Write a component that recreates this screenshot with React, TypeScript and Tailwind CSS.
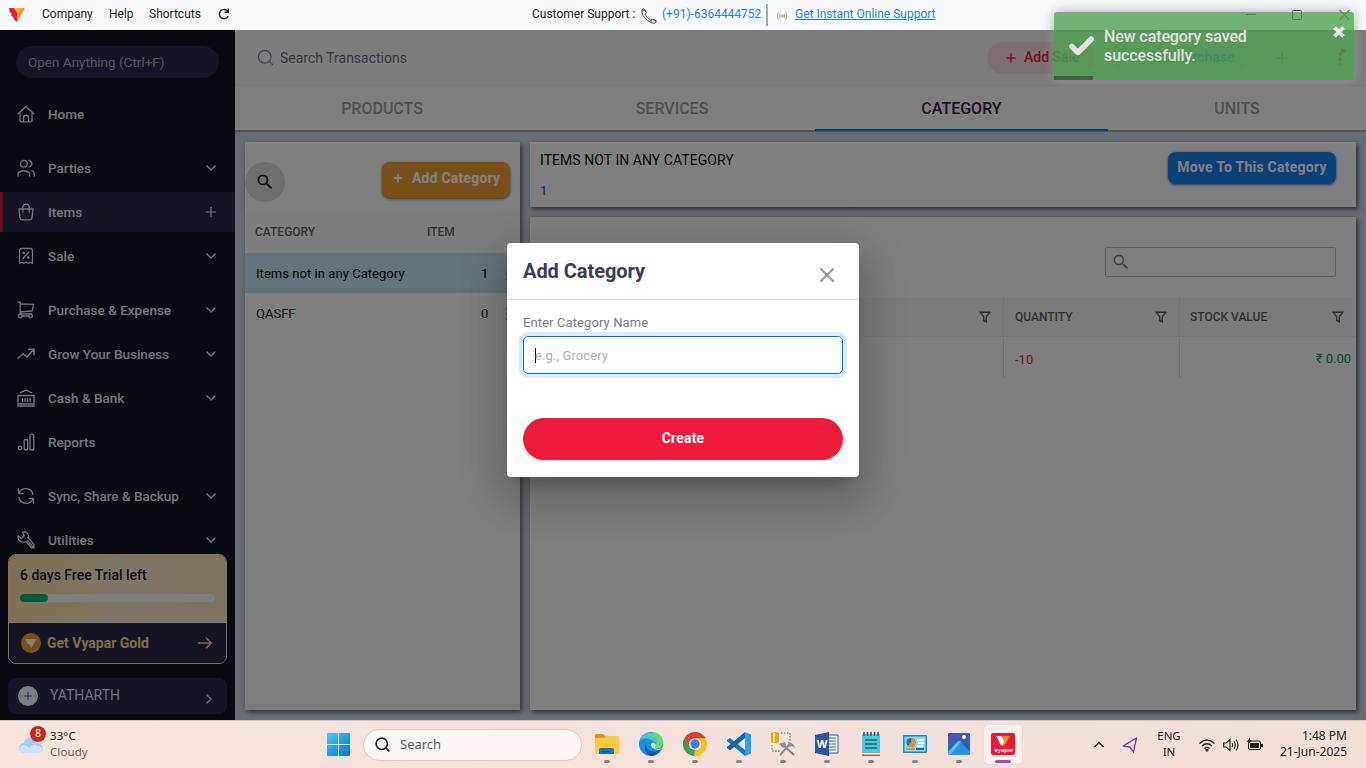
import React from "react";
import {
  Search, ChevronDown, ChevronRight, Plus, ArrowRight, Radio, Check, X,
} from "lucide-react";

const ico = {
  width: 18, height: 18, viewBox: "0 0 18 18", fill: "none", stroke: "currentColor",
  strokeWidth: 1.3, strokeLinecap: "round" as const, strokeLinejoin: "round" as const,
};

const HomeIcon = () => (
  <svg {...ico}><path d="M1.2 8.800 9 1.500l7.800 7.300M3 7.800v7.700q0 1.300 1.300 1.300h9.400q1.300 0 1.300-1.300V7.800M6.500 16.800v-4.300c0-3 5-3 5 0v4.300" /></svg>
);
const PartiesIcon = () => (
  <svg {...ico}><circle cx="6.8" cy="4.8" r="3.4" /><path d="M1 17v-1.700c0-4.400 11.600-4.400 11.600 0V17M12 1.500c3.800 1 3.800 5.600 0 6.600M15 11.500c1.500.7 2.200 1.800 2.200 3.300V17" /></svg>
);
const BagIcon = () => (
  <svg {...ico}><path d="M2 6h14l-1 9q-.3 1.800-1.800 1.800H4.800Q3.300 16.800 3 15zM5.800 9V4.500c0-4.400 6.400-4.400 6.400 0V9" /></svg>
);
const SaleIcon = () => (
  <svg {...ico}><path d="M2.500 16.500v-13q0-2 2-2h9q2 0 2 2v13l-2.200-1.300-2.100 1.300L9 15.200l-2.200 1.300-2.100-1.300zM6.200 11.200l5.600-6" /><circle cx="6.700" cy="5.800" r=".7" /><circle cx="11.300" cy="10.600" r=".7" /></svg>
);
const CartIcon = () => (
  <svg {...ico}><path d="M1 1.200h2.200v11.600h11.300M3.200 2.800 16.500 3.300l-1.300 6.700-12 1" /><circle cx="3.300" cy="15" r="1.800" /><circle cx="13.500" cy="15" r="1.800" /><path d="M5.100 15h6.600M3.200 12.800v.4M14.500 12.800v.6" /></svg>
);
const GrowIcon = () => (
  <svg {...ico} strokeWidth={1.500}><path d="M1 13.500 6 8.500l4 3.500 7-7.700M11.500 4.200H17v5.500" /></svg>
);
const BankIcon = () => (
  <svg {...ico}><path d="M3 3.800 9 1.200l6 2.600M1 6.500h16v10.500H1zM1 15h16M5.500 9.500v3M8 9.500v3M10.500 9.500v3M13 9.500v3" /></svg>
);
const ReportsIcon = () => (
  <svg {...ico}><circle cx="3" cy="15" r="1.800" /><rect x="7.200" y="6.500" width="3.500" height="10.500" rx="1.200" /><rect x="13" y="1.200" width="3.800" height="15.800" rx="1.200" /></svg>
);
const SyncIcon = () => (
  <svg {...ico}><path d="M1.500 2v4.500H6M16.500 16v-4.500H12M2 6.200c2.500-6.500 12.500-6 14 1.300M16 11.800C13.500 18.300 3.500 17.800 2 10.500" /></svg>
);
const WrenchIcon = () => (
  <svg {...ico}><path d="M5.500 1.200c4-1.200 6.800 2 5.600 5.400L17 13.500v3.300h-2.500L9 10.500C5 12.500 0 9 1.200 4.800l3.300 2.700 2.700-2.700zM10.500 9.500l5.800 6.500" /></svg>
);

const menu: { label: string; icon: React.ReactNode; end?: "down" | "plus"; gap?: boolean; active?: boolean; }[] = [
  { label: "Home", icon: <HomeIcon />, gap: true },
  { label: "Parties", icon: <PartiesIcon />, end: "down" },
  { label: "Items", icon: <BagIcon />, end: "plus", active: true },
  { label: "Sale", icon: <SaleIcon />, end: "down", gap: true },
  { label: "Purchase & Expense", icon: <CartIcon />, end: "down" },
  { label: "Grow Your Business", icon: <GrowIcon />, end: "down" },
  { label: "Cash & Bank", icon: <BankIcon />, end: "down" },
  { label: "Reports", icon: <ReportsIcon />, gap: true },
  { label: "Sync, Share & Backup", icon: <SyncIcon />, end: "down" },
  { label: "Utilities", icon: <WrenchIcon />, end: "down" },
];

const VLogo = ({ className }: { className: string }) => (
  <svg className={className} viewBox="0 0 16 14">
    <path d="M0 0h6l2.500 5v9L5 11.500l-.8-2.500-2-1 .3-2.500L.8 4z" fill="#ef1b3c" />
    <path d="M5 0h11L8.500 13.500 9 6z" fill="#f99b1c" />
    <path d="M5 0h6.500L9.300 6.500z" fill="#fdb92e" />
  </svg>
);

function TitleBar() {
  return (
    <header className="flex h-[30px] shrink-0 items-center bg-[#f7f9fd] text-[12px] text-[#222]">
      <VLogo className="ml-[9px] h-[14px] w-4" />
      <nav className="ml-[17px] flex w-[490px] items-center pb-[2px]">
        <span className="w-[67px]">Company</span>
        <span className="w-[40px]">Help</span>
        <span className="w-[69px]">Shortcuts</span>
        <svg className="h-[12px] w-[12px]" viewBox="0 0 12 12" fill="none" stroke="#222" strokeWidth="1.400"><path d="M10.300 8.200A4.700 4.700 0 1 1 10 3.500M10.300.5v3.800H6.500" /></svg>
      </nav>
      <div className="flex items-center pb-[2px]">
        <span className="w-[109px] whitespace-nowrap">Customer Support :</span>
        <svg className="mt-[3px] size-4" viewBox="0 0 16 16" fill="none" stroke="#444" strokeWidth="1" strokeLinejoin="round"><path d="M1.500 1 3 .8l2.500 4-1.300 1.400q1.500 4 5.500 6l1.500-1.200 4 2-.4 1.500q-2 1.500-5 0Q2.500 11 .8 4q-.2-2 .7-3zM3.800 1.500 1.200 3M10.500 11.500 9.800 14M12 11l3.500 2" /></svg>
        <span className="ml-[5px] w-[104px] whitespace-nowrap text-[#2680f5]">(+91)-6364444752</span>
        <span className="mt-[2px] h-[22px] w-[2px] bg-[#a9abb2]" />
        <Radio size={12} strokeWidth={1.500} className="ml-[8px] mt-1 text-[#8a8c94]" />
        <span className="ml-[7px] whitespace-nowrap text-[#2680f5] underline">Get Instant Online Support</span>
      </div>
      <svg className="ml-auto mr-[16px] h-[12px] w-[104px]" viewBox="0 0 104 12" fill="none" stroke="#222">
        <path d="M0 5.500h10M93.500 1l10 10M103.500 1l-10 10" /><rect x="46.500" y="1.500" width="9" height="9" rx="1" />
      </svg>
    </header>
  );
}

function Sidebar() {
  return (
    <aside className="flex h-full w-[235px] shrink-0 flex-col bg-[#121224] text-white">
      <div className="ml-4 mt-4 flex h-8 w-[203px] shrink-0 items-center rounded-full bg-[#28284a] pl-3 text-[13.500px] text-[#a4a4b4]">Open Anything (Ctrl+F)</div>
      <nav className="mt-4 flex h-[460px] shrink-0 flex-col gap-1 overflow-hidden">
        {menu.map((m) => (
          <div key={m.label} className={`flex h-10 shrink-0 items-center border-l-[3px] pl-[14px] pr-4 text-[13.500px] font-medium text-[#e8e8ee] ${m.active ? "border-[#e01a3a] bg-[#28284a]" : "border-transparent"} ${m.gap ? "mb-[10px]" : ""}`}>
            {m.icon}
            <span className="ml-[13px] flex-1 pt-px">{m.label}</span>
            {m.end === "down" && <ChevronDown size={16} strokeWidth={2} />}
            {m.end === "plus" && <Plus size={16} strokeWidth={1.800} />}
          </div>
        ))}
      </nav>
      <div className="mx-2 flex h-[110px] shrink-0 flex-col overflow-hidden rounded-lg border border-[#ffe7ba]">
        <div className="flex h-[68px] shrink-0 flex-col bg-[linear-gradient(100deg,#f8dfaa_0%,#ffe9be_36%,#fdebd5_48%,#fce8c8_100%)] px-[11px] pt-[10px]">
          <span className="text-[14px] font-medium leading-5 text-[#1c1c38]">6 days Free Trial left</span>
          <div className="mt-[9px] h-2 rounded-full bg-white"><div className="h-2 w-7 rounded-full bg-[#00b877]" /></div>
        </div>
        <div className="flex flex-1 items-center bg-[#28284a] pl-3 pr-[14px] text-[#fbd698]">
          <svg className="size-5" viewBox="0 0 20 20"><circle cx="10" cy="10" r="10" fill="#ee9f20" /><path d="M4.500 6h11l-5 9-2-3.500-2-.8z" fill="#fff" /></svg>
          <span className="ml-[6px] flex-1 text-[14px] font-bold">Get Vyapar Gold</span>
          <svg className="h-3 w-[14px]" viewBox="0 0 14 12" fill="none" stroke="currentColor" strokeWidth="1.400"><path d="M0 6h13M8 .8 13.200 6 8 11.200" /></svg>
        </div>
      </div>
      <div className="mx-2 mt-[14px] flex h-9 shrink-0 items-center rounded-lg bg-[#28284a] pl-[10px] pr-[10px] text-[#dedee8]">
        <span className="flex size-5 items-center justify-center rounded-full bg-white text-[#1789fc]"><Plus size={12} strokeWidth={2.400} /></span>
        <span className="ml-3 flex-1 pb-[2px] text-[14px]">YATHARTH</span>
        <ChevronRight size={16} className="mt-[6px]" />
      </div>
    </aside>
  );
}

const MatSearch = ({ className }: { className: string }) => (
  <svg className={className} viewBox="0 0 24 24" fill="currentColor"><path d="M15.500 14h-.79l-.28-.27A6.471 6.471 0 0 0 16 9.500 6.500 6.500 0 1 0 9.500 16c1.610 0 3.090-.59 4.230-1.570l.27.28v.79l5 4.990L20.490 19l-4.990-5zm-6 0C7.010 14 5 11.990 5 9.500S7.010 5 9.500 5 14 7.010 14 9.500 11.990 14 9.500 14z" /></svg>
);

const Dots = () => <svg className="h-4 w-1" viewBox="0 0 4 16" fill="#777"><circle cx="2" cy="3" r="1.100" /><circle cx="2" cy="8" r="1.100" /><circle cx="2" cy="13" r="1.100" /></svg>;

const FunnelIcon = () => (
  <svg className="h-3 w-[12px]" viewBox="0 0 12 12" fill="none" stroke="currentColor" strokeWidth="1.400"><path d="M1.200 1.200h9.600L7.300 5.800v5L4.700 9.500V5.800z" /></svg>
);

const tabs = [
  { label: "PRODUCTS", cls: "w-[294px] text-[#a4a4a4]" },
  { label: "SERVICES", cls: "w-[286px] text-[#a4a4a4]" },
  { label: "CATEGORY", cls: "w-[293px] text-[#3d2145]" },
  { label: "UNITS", cls: "w-[258px] text-[#a4a4a4]" },
];

const panel = "bg-white shadow-[2px_2px_5px_rgba(50,60,70,0.75)]";

function Content() {
  return (
    <main className="flex min-w-0 flex-1 flex-col bg-[#cfd8e6]">
      <div className="flex h-14 shrink-0 items-center border-b border-l border-[#f0f0f3] bg-[#fafafb] pl-5">
        <Search size={19} strokeWidth={1.600} className="text-[#8b8ba6]" />
        <span className="ml-[5px] flex-1 pt-[2px] text-[14px] text-[#71718c]">Search Transactions</span>
        <div className="flex h-8 w-[108px] items-center gap-[6px] rounded-full bg-[#fde1e5] pl-[17px] text-[14px] font-medium text-[#ed1a3b]"><Plus size={14} strokeWidth={2.300} />Add Sale</div>
        <div className="ml-[15px] flex h-8 w-[139px] items-center gap-[6px] whitespace-nowrap rounded-full bg-[#d8ecfb] pl-[17px] text-[14px] font-medium text-[#1789fc]"><Plus size={14} />Add Purchase</div>
        <div className="ml-[17px] flex size-8 items-center justify-center rounded-full border border-[#e4eef8] text-[#1789fc]"><Plus size={16} strokeWidth={1.800} /></div>
        <svg className="ml-[37px] mr-[19px] h-5 w-3" viewBox="0 0 12 20" fill="#555a78"><circle cx="5" cy="6" r="1.500" /><circle cx="5" cy="11" r="1.500" /><circle cx="5" cy="16" r="1.500" /><circle cx="8" cy="3" r="2.500" fill="#ed1a3b" /></svg>
      </div>
      <div className="flex h-[46px] shrink-0 border-b-2 border-[#a4a7a4] bg-white text-[16px] font-medium">
        {tabs.map((t) => (
          <div key={t.label} className={`flex h-[45px] items-center justify-center ${t.label === "CATEGORY" ? "border-b-2 border-[#0a8bd0] pt-[2px]" : "pt-px"} ${t.cls}`}>{t.label}</div>
        ))}
      </div>
      <div className="flex min-h-0 flex-1 gap-[10px] p-[10px]">
        <section className={`flex w-[275px] shrink-0 flex-col ${panel}`}>
          <div className="flex h-[70px] shrink-0 items-start justify-between pr-[10px] pt-5">
            <div className="flex h-10 w-10 items-center justify-center rounded-full bg-[#dedede] text-black"><MatSearch className="size-[20px]" /></div>
            <button className="flex h-9 w-[128px] items-center whitespace-nowrap rounded-lg bg-[#f3a133] pb-1 pl-[10px] text-[14px] font-bold text-white shadow-[0_1px_3px_rgba(0,0,0,0.6)]"><Plus size={12} strokeWidth={3.600} /><span className="ml-[8px] tracking-[0.2px]">Add Category</span></button>
          </div>
          <div className="flex h-[41px] shrink-0 items-center bg-[#fafafa] pb-[2px] pl-[10px] text-[12px] font-medium text-[#666]"><span className="w-[172px]">CATEGORY</span><span>ITEM</span></div>
          <div className="flex h-10 shrink-0 items-center bg-[#c8e6f2] pl-[11px] pt-px text-[13px] tracking-[0.05px] text-black"><span className="w-[225px]">Items not in any Category</span><span className="w-[24px]">1</span><Dots /></div>
          <div className="flex h-10 shrink-0 items-center pl-[11px] pt-px text-[13px] text-[#222]"><span className="w-[225px]">QASFF</span><span className="w-[24px]">0</span><Dots /></div>
          <div className="mt-auto h-[6px] bg-[#f0f0f0]" />
        </section>
        <div className="flex min-w-0 flex-1 flex-col gap-[10px]">
          <section className={`flex h-[65px] shrink-0 justify-between pl-[10px] pr-5 pt-[10px] ${panel}`}>
            <div className="flex flex-col text-[14px] leading-4"><span className="tracking-[0.05px] text-[#111]">ITEMS NOT IN ANY CATEGORY</span><span className="mt-[15px] text-[13px] text-[#1d5c98]">1</span></div>
            <button className="flex h-8 w-[168px] items-center justify-center whitespace-nowrap rounded-lg bg-[#1381f5] pb-[2px] text-[14px] font-bold tracking-[0.25px] text-white shadow-[0_1px_3px_rgba(0,0,0,0.6)]">Move To This Category</button>
          </section>
          <section className={`flex min-h-0 flex-1 flex-col ${panel}`}>
            <div className="flex h-20 shrink-0 justify-end pr-5 pt-[30px]">
              <div className="flex h-[30px] w-[231px] items-center rounded-[2px] border border-[#c6c6c6] pl-[5px] text-[#888]"><MatSearch className="size-5" /></div>
            </div>
            <div className="grid h-10 shrink-0 grid-cols-[474px_176px_176px] border-b border-[#f0f0f0] bg-[#f8f8f8] text-[12px] font-medium text-[#666]">
              <div className="flex items-center justify-end border-r border-[#e8e8e8] pr-[12px]"><FunnelIcon /></div>
              <div className="flex items-center justify-between border-r border-[#e8e8e8] pl-[11px] pr-[12px]">QUANTITY<FunnelIcon /></div>
              <div className="flex items-center justify-between pl-[10px] pr-[12px]">STOCK VALUE<FunnelIcon /></div>
            </div>
            <div className="mt-[2px] grid h-[39px] shrink-0 grid-cols-[474px_176px_176px] text-[13px]">
              <div className="border-r border-[#e0e0e0]" />
              <div className="flex items-center border-r border-[#e0e0e0] pl-[11px] pt-[2px] text-[#e0454c]">-10</div>
              <div className="flex items-center justify-end pr-[5px] text-[#0f9a65]">₹ 0.00</div>
            </div>
          </section>
        </div>
      </div>
    </main>
  );
}

function Dialog() {
  return (
    <div className="flex h-[234px] w-[352px] flex-col rounded bg-white shadow-[0_11px_15px_-7px_rgba(0,0,0,0.2),0_24px_38px_3px_rgba(0,0,0,0.14),0_9px_46px_8px_rgba(0,0,0,0.12)]">
      <div className="flex h-[57px] shrink-0 items-center justify-between border-b border-[#dddde3] pl-4 pr-5">
        <h2 className="text-[20px] font-bold tracking-[-0.05px] text-[#3c3c55]">Add Category</h2>
        <X size={24} strokeWidth={2} className="mt-[8px] text-[#999]" />
      </div>
      <div className="flex flex-1 flex-col px-4 pt-[14px]">
        <label className="text-[13px] leading-[18px] text-[#7b7b96] tracking-[0.1px]">Enter Category Name</label>
        <div className="mt-[4px] flex h-[38px] items-center rounded-[5px] border border-[#0a76dc] pl-[11px] pt-px text-[13px] tracking-[0.1px] text-[#b2b2b9] shadow-[0_0_0_4px_#dcebf7]"><span className="mb-px h-[15px] w-px bg-black" /><span className="-ml-px pt-px">e.g., Grocery</span></div>
        <button className="mt-11 flex h-[42px] items-center justify-center rounded-full bg-[#f01a3b] pb-[2px] text-[14px] font-bold tracking-[0.2px] text-white">Create</button>
      </div>
    </div>
  );
}

function Toast() {
  return (
    <div className="absolute left-[1054px] top-3 flex h-[68px] w-[300px] rounded-[3px] bg-[#51a351] text-white opacity-80 shadow-[0_0_12px_#999]">
      <Check size={29} strokeWidth={4.500} className="ml-[13px] mt-[20px]" />
      <p className="ml-[8px] mt-[15px] w-[200px] text-[16px] font-medium leading-[19px] tracking-[-0.1px]">New category saved successfully.</p>
      <svg className="ml-auto mr-[9px] mt-[14px] size-3" viewBox="0 0 12 12" stroke="white" strokeWidth="3.600"><path d="M1.500 1.500l9 9M10.500 1.500l-9 9" /></svg>
      <div className="absolute bottom-0 left-0 h-1 w-[39px] bg-black/40" />
    </div>
  );
}

const apps: { name: string; art: React.ReactNode; active?: boolean }[] = [
  { name: "explorer", art: <><path d="M0 3.500Q0 2 1.500 2H8l2 2h14v5H0z" fill="#d99a08" /><path d="M0 6h9l2-2h13v18H0z" fill="#fccc3a" /><path d="M4 22v-4q0-2 2-2h11q2 0 2 2v4z" fill="#1276cf" /><path d="M7 19h9v1.500H7z" fill="#0a529a" /></> },
  { name: "edge", art: <><circle cx="12" cy="12" r="12" fill="#1590df" /><path d="M1 8C5-3 24-1 24 11c0 4-4 6-8 5 2-3 1-7-3-8C8 6 4 6 1 8z" fill="#45cfc0" /><path d="M13 0c8 0 11 6 11 11 0 4-4 6-8 5 2-3 2-5 2-7C18 5 15 2 13 0z" fill="#65dc74" /><path d="M7 12c0 6 6 10 14 6-2 4-6 6-9 6-5-2-8-8-5-12z" fill="#0c55a3" /><path d="M12.500 11c-2 3 2 8 9 6.500l1.500-1.500c-4 1.500-7 1-6.500-1 1-2 0-4-1.500-4.500z" fill="#f4e1dc" /></> },
  { name: "chrome", art: <><circle cx="12" cy="12" r="12" fill="#fbc116" /><path d="M1.600 6A12 12 0 0 1 22.400 6H12l-5.200 9z" fill="#e33b2e" /><path d="M1.600 6 6.800 15 12 18l-1 6A12 12 0 0 1 1.600 6z" fill="#2da34b" /><circle cx="12" cy="12" r="6" fill="#fff" /><circle cx="12" cy="12" r="4.700" fill="#3b7ded" /></> },
  { name: "code", art: <><path d="M0 8l3-2 15 12v6L0 9z" fill="#1b75bf" /><path d="M0 16l3 2.500L18 6V0L0 15z" fill="#0a68b0" /><path d="M18 0l6 2.500v19L18 24z" fill="#2fa1ea" /></> },
  { name: "tools", art: <><path d="M0 1q4-2 8 0v9q-4 2-8 0z" fill="#dcae1d" /><path d="M2 1h2v9H2z" fill="#fae681" /><path d="M10 1h9v8M1 13v6h9" fill="none" stroke="#31802f" strokeDasharray="1.500 1.500" /><path d="M9 23l9-10M11 12l12 11" stroke="#8c8c8c" strokeWidth="2" /><path d="M8 12l6-2 1 3-3 3zM17 10q6 1 7 6l-3-2-3 1z" fill="#8394a8" /></> },
  { name: "word", art: <><path d="M12 3h11v18H12z" fill="#fff" stroke="#2b579a" /><path d="M14 6h7M14 9h7M14 12h7M14 15h7M14 18h7" stroke="#2b579a" /><path d="M0 3l14-3v24L0 21z" fill="#2b579a" /><text x="1.800" y="16" fontSize="11" fontWeight="bold" fill="#fff">W</text></> },
  { name: "notes", art: <><path d="M3 2h18v20H3z" fill="#55c5dc" /><path d="M3 21h18v3H3z" fill="#f5ede4" /><path d="M3 22.500h18V24H3z" fill="#b96924" /><path d="M5 0v4M8.500 0v4M12 0v4M15.500 0v4M19 0v4" stroke="#175f79" strokeWidth="1.500" /><path d="M6 8h12M6 12h12M6 16h12" stroke="#137184" strokeWidth="1.500" /></> },
  { name: "panel", art: <><rect y="3" width="24" height="18" rx="1" fill="#1889ca" /><rect x="1.500" y="4.500" width="21" height="15" fill="#86dbfa" /><circle cx="8" cy="10.500" r="4.500" fill="#1a70ba" /><path d="M8 10.500V6a4.500 4.500 0 0 1 0 9H3.500z" fill="#f58a22" /><path d="M14 8h7M15 11h6M14 14h6" stroke="#fff" strokeWidth="1.500" /><path d="M3 17h9" stroke="#f58a22" strokeWidth="2" /><path d="M13 17h8" stroke="#176fb5" strokeWidth="2" /></> },
  { name: "photos", art: <><rect x="1" y="1" width="22" height="22" rx="2" fill="#2c60b5" /><path d="M1 14V3q0-2 2-2h18q2 0 2 2v9z" fill="#4357b5" /><path d="M1 21 10 10q2-2 4 0l9 10v1q0 2-2 2H3q-2 0-2-2z" fill="#2e8fe0" /><path d="M1 20l10-11q2-1 3 1L3 23H2z" fill="#48c5f2" /><circle cx="17" cy="5" r="2" fill="#fff" /></> },
  { name: "vyapar", active: true, art: <><rect y="1" width="24" height="22" rx="2" fill="#ee1739" /><path d="M5 4h6l2 5-1 5-3-2-1-3z" fill="#fff" /><path d="M10 4h9l-6 10V9z" fill="#f99b1c" /><text x="3.600" y="19.500" fontSize="5.500" fontWeight="bold" fill="#fff">vyapar</text></> },
];

function Taskbar() {
  return (
    <footer className="flex h-12 shrink-0 items-center border-t border-[#d9cac6] bg-[linear-gradient(90deg,#f8e4df,#f3dfda)] font-['Noto_Sans','Open_Sans',sans-serif] text-[11.500px] text-[#222]">
      <div className="relative ml-[18px] h-9 w-[30px]">
        <svg className="mt-[8px] h-[20px] w-[26px]" viewBox="0 0 26 20"><path d="M6 18a5 5 0 0 1 0-10C7 1 17 1 18 8c8-1 9 10 2 10z" fill="#a9cdf9" /><path d="M6 18c-7-1-5-8 0-8 3 0 4 2 5 3 3-4 7-4 8-2 7-1 7 7 1 7z" fill="#cde2fd" /></svg>
        <span className="absolute left-3 top-[-1px] flex size-4 items-center justify-center rounded-full bg-[#c42b1c] text-[10px] text-white">8</span>
      </div>
      <div className="ml-[2px] w-[277px] pb-[2px] leading-4 tracking-[0.1px]"><div>33°C</div><div className="text-[#70625f]">Cloudy</div></div>
      <svg className="h-[23px] w-[23px]" viewBox="0 0 23 23"><defs><linearGradient id="w" x2="1" y2="1"><stop stopColor="#4cc7fb" /><stop offset="1" stopColor="#0672ce" /></linearGradient></defs><path d="M0 1q0-1 1-1h10v11H0zM12 0h10q1 0 1 1v10H12zM0 12h11v11H1q-1 0-1-1zM12 12h11v10q0 1-1 1H12z" fill="url(#w)" /></svg>
      <div className="ml-[13px] flex h-[32px] w-[219px] items-center rounded-full border border-[#e0cbc6] bg-[#fdf6f4] pl-[10px] text-[13px] text-[#5d5553]"><Search size={17} strokeWidth={2.300} className="text-[#222]" /><span className="ml-[9px]">Search</span></div>
      <div className="ml-[3px] flex">
        {apps.map((a) => (
          <div key={a.name} className="flex w-11 justify-center">
            <div className={`flex h-[39px] w-[38px] flex-col items-center rounded ${a.active ? "bg-[#fbf0ee] shadow-[0_0_1px_#bbb]" : ""}`}>
              <svg className="mt-[7px] size-6 shrink-0" viewBox="0 0 24 24">{a.art}</svg>
              <span className={`mt-[4px] h-[3px] rounded-full ${a.active ? "w-4 bg-[#ab47bc]" : "w-[6px] bg-[#8b8280]"}`} />
            </div>
          </div>
        ))}
      </div>
      <svg className="ml-[69px] h-[7px] w-[10px]" viewBox="0 0 10 7" fill="none" stroke="#222" strokeWidth="1.500"><path d="M.5 6 5 1.500 9.500 6" /></svg>
      <svg className="ml-[18px] size-4" viewBox="0 0 16 16" fill="none" stroke="#85389a" strokeWidth="1.300" strokeLinejoin="round"><path d="M14.500 1 1 9l7 1.200 3.500 5z" /></svg>
      <div className="ml-[15px] w-[32px] pb-px text-center leading-4">ENG<br />IN</div>
      <svg className="ml-[14px] h-[14px] w-4" viewBox="0 0 16 14" fill="none" stroke="#222" strokeWidth="1.200"><path d="M.5 5.500q7.500-7 15 0M3 8q5-4.500 10 0M5.500 10.500q2.500-2.200 5 0" /><circle cx="8" cy="12" r="1" fill="#222" /></svg>
      <svg className="ml-2 h-[14px] w-4" viewBox="0 0 16 14" fill="none" stroke="#222" strokeWidth="1.100"><path d="M.7 5h2.500L7 1.500v11L3.200 9H.7zM9 5q1.300 2 0 4M11 3.300q2.500 3.700 0 7.400M13 1.500q4 5.500 0 11" /></svg>
      <svg className="ml-2 mb-px h-[14px] w-4" viewBox="0 0 16 14"><rect x="1.500" y="4" width="12" height="8.500" rx="1.500" fill="none" stroke="#222" /><path d="M3 6h9v5H3zM14 7h2v3h-2zM3 0 0 5h2L1 8l4-5H3z" fill="#222" /></svg>
      <div className="ml-auto mr-[19px] pb-[2px] text-right text-[12px] leading-4">1:48 PM<br />21-Jun-2025</div>
    </footer>
  );
}

export default function App() {
  return (
    <div className="relative flex h-[768px] w-[1366px] flex-col overflow-hidden font-['Roboto',sans-serif]">
      <TitleBar />
      <div className="relative flex h-[690px] shrink-0 overflow-hidden">
        <Sidebar />
        <Content />
        <div className="absolute inset-0 flex items-center justify-center bg-black/50 pb-[30px]"><Dialog /></div>
      </div>
      <Taskbar />
      <Toast />
    </div>
  );
}
